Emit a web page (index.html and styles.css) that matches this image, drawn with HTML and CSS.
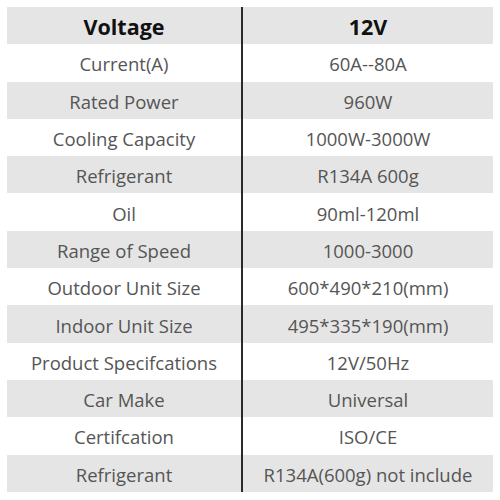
FILE: index.html
```html
<!DOCTYPE html>
<html>
<head>
<meta charset="utf-8">
<link rel="stylesheet" href="styles.css">
</head>
<body>
<div class="table">
  <div class="row head"><div class="cell left">Voltage</div><div class="cell">12V</div></div>
  <div class="row"><div class="cell left">Current(A)</div><div class="cell">60A--80A</div></div>
  <div class="row alt"><div class="cell left">Rated Power</div><div class="cell">960W</div></div>
  <div class="row"><div class="cell left">Cooling Capacity</div><div class="cell">1000W-3000W</div></div>
  <div class="row alt"><div class="cell left">Refrigerant</div><div class="cell">R134A 600g</div></div>
  <div class="row"><div class="cell left">Oil</div><div class="cell">90ml-120ml</div></div>
  <div class="row alt"><div class="cell left">Range of Speed</div><div class="cell">1000-3000</div></div>
  <div class="row"><div class="cell left">Outdoor Unit Size</div><div class="cell">600*490*210(mm)</div></div>
  <div class="row alt"><div class="cell left">Indoor Unit Size</div><div class="cell">495*335*190(mm)</div></div>
  <div class="row"><div class="cell left">Product Specifcations</div><div class="cell">12V/50Hz</div></div>
  <div class="row alt"><div class="cell left">Car Make</div><div class="cell">Universal</div></div>
  <div class="row"><div class="cell left">Certifcation</div><div class="cell">ISO/CE</div></div>
  <div class="row alt"><div class="cell left">Refrigerant</div><div class="cell">R134A(600g) not include</div></div>
</div>
</body>
</html>
```
FILE: styles.css
```css
html, body {
  margin: 0;
  padding: 0;
  background: #ffffff;
}
body {
  padding: 7px 7px 0 7px;
  font-family: "Open Sans", "Noto Sans", sans-serif;
}
.table {
  width: 486px;
  display: flex;
  flex-direction: column;
}
.row {
  display: grid;
  grid-template-columns: 236px 250px;
  height: 37.3px;
  align-items: center;
  color: #555555;
  font-size: 18.5px;
}
.row.alt, .row.head {
  background: #e5e5e5;
}
.row.head {
  color: #111111;
  font-weight: 700;
  font-size: 21.5px;
}
.cell {
  height: 100%;
  display: flex;
  align-items: center;
  justify-content: center;
  white-space: nowrap;
  padding-top: 2px;
  box-sizing: border-box;
}
.cell.left {
  border-right: 2px solid #2a2a2a;
}
```
